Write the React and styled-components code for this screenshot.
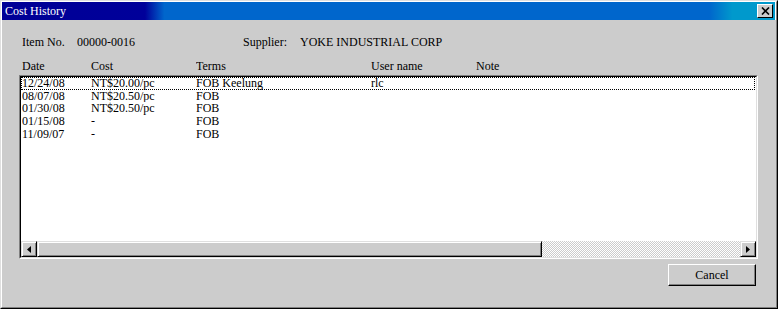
import React from "react";
import styled, { createGlobalStyle } from "styled-components";

const Global = createGlobalStyle`
  body {
    margin: 0;
    background: #cccccc;
    font-family: "Liberation Serif", "Times New Roman", serif;
  }
`;

const Window = styled.div`
  width: 778px;
  height: 309px;
  box-sizing: border-box;
  background: #cccccc;
  border: 1px solid;
  border-color: #dfdfdf #000 #000 #dfdfdf;
  display: flex;
  flex-direction: column;
`;

const Frame = styled.div`
  flex: 1;
  display: flex;
  flex-direction: column;
  border: 1px solid;
  border-color: #fff #808080 #808080 #fff;
`;

const TitleBar = styled.div`
  height: 18px;
  display: flex;
  align-items: center;
  justify-content: space-between;
  padding: 0 2px 0 3px;
  background: linear-gradient(
    90deg,
    #000096 0%,
    #00009a 18.5%,
    #0066cc 21%,
    #0066cc 91.5%,
    #0099cc 94.5%,
    #0099cc 100%
  );
  border-right: 1px solid #fff;
`;

const Title = styled.span`
  color: #fff;
  font-size: 12px;
  line-height: 14px;
`;

const CloseBtn = styled.div`
  width: 16px;
  height: 14px;
  box-sizing: border-box;
  background: #cccccc;
  border: 1px solid;
  border-color: #fff #000 #000 #fff;
  display: flex;
  align-items: center;
  justify-content: center;
`;

const Body = styled.div`
  flex: 1;
  display: flex;
  flex-direction: column;
  padding: 0 18px 0 17px;
`;

const InfoRow = styled.div`
  display: flex;
  margin-top: 15px;
  height: 14px;
  font-size: 12px;
  line-height: 14px;
  color: #000;
`;

const Cell = styled.span`
  width: ${(p) => p.w || 0}px;
  flex: ${(p) => (p.w ? "none" : 1)};
  white-space: nowrap;
  overflow: hidden;
`;

const HeaderRow = styled.div`
  display: flex;
  margin-top: 10px;
  height: 14px;
  padding-left: 3px;
  font-size: 12px;
  line-height: 14px;
`;

const ListBox = styled.div`
  margin-top: 2px;
  height: 184px;
  box-sizing: border-box;
  border: 1px solid;
  border-color: #808080 #fff #fff #808080;
  display: flex;
`;

const ListInner = styled.div`
  flex: 1;
  border: 1px solid;
  border-color: #000 #dfdfdf #dfdfdf #000;
  background: #fff;
  display: flex;
  flex-direction: column;
`;

const Rows = styled.div`
  flex: 1;
`;

const Row = styled.div`
  display: flex;
  height: 12.67px;
  box-sizing: border-box;
  padding-left: 1px;
  font-size: 12px;
  line-height: 12px;
  outline: ${(p) => (p.focus ? "1px dotted #000" : "none")};
  outline-offset: -1px;
  margin-right: 1px;
`;

const ScrollBar = styled.div`
  height: 16px;
  display: flex;
`;

const ArrowBtn = styled.div`
  width: 16px;
  height: 16px;
  box-sizing: border-box;
  background: #cccccc;
  border: 1px solid;
  border-color: #dfdfdf #000 #000 #dfdfdf;
  box-shadow: inset 1px 1px #fff, inset -1px -1px #808080;
  display: flex;
  align-items: center;
  justify-content: center;
`;

const Thumb = styled(ArrowBtn)`
  width: 505px;
`;

const Track = styled.div`
  flex: 1;
  background: repeating-conic-gradient(#fff 0 25%, #cccccc 0 50%) 0 0 / 2px 2px;
`;

const Footer = styled.div`
  display: flex;
  justify-content: flex-end;
  margin-top: 5px;
  padding-right: 2px;
`;

const Button = styled.button`
  width: 88px;
  height: 22px;
  box-sizing: border-box;
  background: #cccccc;
  border: 1px solid;
  border-color: #fff #000 #000 #fff;
  box-shadow: inset -1px -1px #808080;
  font-family: "Liberation Serif", "Times New Roman", serif;
  font-size: 12px;
  color: #000;
  padding: 0;
`;

const cols = [69, 105, 175, 105, 0];

const data = [
  ["12/24/08", "NT$20.00/pc", "FOB Keelung", "rlc", ""],
  ["08/07/08", "NT$20.50/pc", "FOB", "", ""],
  ["01/30/08", "NT$20.50/pc", "FOB", "", ""],
  ["01/15/08", "-", "FOB", "", ""],
  ["11/09/07", "-", "FOB", "", ""],
];

const Tri = ({ left }) => (
  <svg width="4" height="7" viewBox="0 0 4 7">
    <path d={left ? "M4 0 L0 3.5 L4 7 Z" : "M0 0 L4 3.5 L0 7 Z"} fill="#000" />
  </svg>
);

export default function App() {
  return (
    <>
      <Global />
      <Window>
        <Frame>
          <TitleBar>
            <Title>Cost History</Title>
            <CloseBtn>
              <svg width="9" height="8" viewBox="0 0 9 8">
                <path d="M1 0.5 L8 7.5 M8 0.5 L1 7.5" stroke="#000" strokeWidth="1.6" />
              </svg>
            </CloseBtn>
          </TitleBar>
          <Body>
            <InfoRow>
              <Cell w={3} />
              <Cell w={55}>Item No.</Cell>
              <Cell w={166}>00000-0016</Cell>
              <Cell w={57}>Supplier:</Cell>
              <Cell>YOKE INDUSTRIAL CORP</Cell>
            </InfoRow>
            <HeaderRow>
              {["Date", "Cost", "Terms", "User name", "Note"].map((h, i) => (
                <Cell key={h} w={cols[i]}>
                  {h}
                </Cell>
              ))}
            </HeaderRow>
            <ListBox>
              <ListInner>
                <Rows>
                  {data.map((r, ri) => (
                    <Row key={ri} focus={ri === 0}>
                      {r.map((c, i) => (
                        <Cell key={i} w={cols[i]}>
                          {c}
                        </Cell>
                      ))}
                    </Row>
                  ))}
                </Rows>
                <ScrollBar>
                  <ArrowBtn>
                    <Tri left />
                  </ArrowBtn>
                  <Thumb />
                  <Track />
                  <ArrowBtn>
                    <Tri />
                  </ArrowBtn>
                </ScrollBar>
              </ListInner>
            </ListBox>
            <Footer>
              <Button>Cancel</Button>
            </Footer>
          </Body>
        </Frame>
      </Window>
    </>
  );
}
